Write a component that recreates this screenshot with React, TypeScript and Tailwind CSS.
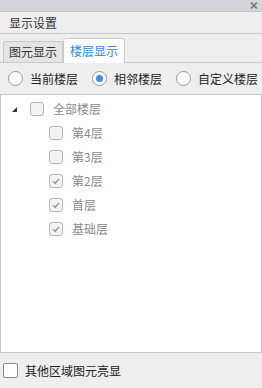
import React from "react";

const font = { fontFamily: '"Noto Sans CJK SC", "Liberation Sans", sans-serif' };

function Box({ checked }: { checked?: boolean }) {
  return (
    <span className="flex h-[14px] w-[14px] shrink-0 items-center justify-center rounded-[3px] border border-[#b5b5b5] bg-[#f2f2f2]">
      {checked && (
        <svg width="10" height="10" viewBox="0 0 10 10">
          <path d="M2 5.2 L4.2 7.3 L8 2.8" fill="none" stroke="#a0a0a0" strokeWidth="1.5" />
        </svg>
      )}
    </span>
  );
}

function Radio({ on, label }: { on?: boolean; label: string }) {
  return (
    <div className="flex shrink-0 items-center gap-[7px] whitespace-nowrap">
      <span className="flex h-[15px] w-[15px] shrink-0 items-center justify-center rounded-full border border-[#9a9a9a] bg-white">
        {on && <span className="h-[7px] w-[7px] rounded-full bg-[#3d8ef0]" />}
      </span>
      <span className="text-[12px] text-[#222]">{label}</span>
    </div>
  );
}

export default function App() {
  const rows = [
    { t: "第4层", c: false },
    { t: "第3层", c: false },
    { t: "第2层", c: true },
    { t: "首层", c: true },
    { t: "基础层", c: true },
  ];
  return (
    <div className="flex h-[388px] w-[262px] flex-col bg-[#eeeeee]" style={font}>
      <div className="flex h-[12px] items-center justify-end border-b border-[#c4c5cc] bg-[#d4d5da] pr-[4px]">
        <svg width="8" height="7" viewBox="0 0 8 7">
          <path d="M1 0.5 L7 6.5 M7 0.5 L1 6.5" stroke="#808080" strokeWidth="1.8" />
        </svg>
      </div>
      <div className="flex h-[22px] items-center border-b border-[#c8c8c8] pl-[9px] text-[12px] text-[#333]">
        显示设置
      </div>
      <div className="flex h-[29px] items-end border-b border-[#c8c8c8] pl-[3px]">
        <div className="-mb-px flex h-[22px] w-[60px] items-center justify-center rounded-t-[2px] border border-[#c8c8c8] bg-[#e4e4e4] text-[12px] text-[#333]">
          图元显示
        </div>
        <div className="-mb-px flex h-[25px] w-[62px] items-center justify-center rounded-t-[3px] border border-b-0 border-[#c8c8c8] bg-white text-[12px] text-[#2f86e8]">
          楼层显示
        </div>
      </div>
      <div className="flex h-[32px] items-center gap-[14px] overflow-hidden border-b border-[#c8c8c8] pl-[8px]">
        <Radio label="当前楼层" />
        <Radio on label="相邻楼层" />
        <Radio label="自定义楼层" />
      </div>
      <div className="flex-1 border-x border-b border-[#c8c8c8] bg-white pt-[2px]">
        <div className="flex h-[24px] items-center">
          <span className="ml-[11px] mr-[13px] h-0 w-0 border-b-[5px] border-l-[5px] border-b-[#333] border-l-transparent" />
          <Box />
          <span className="ml-[9px] text-[12px] text-[#8a8a8a]">全部楼层</span>
        </div>
        {rows.map((r) => (
          <div key={r.t} className="flex h-[24px] items-center pl-[48px]">
            <Box checked={r.c} />
            <span className="ml-[9px] text-[12px] text-[#8a8a8a]">{r.t}</span>
          </div>
        ))}
      </div>
      <div className="flex h-[35px] items-center pl-[3px]">
        <span className="h-[15px] w-[15px] rounded-[2px] border border-[#8a8a8a] bg-white" />
        <span className="ml-[7px] text-[12px] text-[#222]">其他区域图元亮显</span>
      </div>
    </div>
  );
}
